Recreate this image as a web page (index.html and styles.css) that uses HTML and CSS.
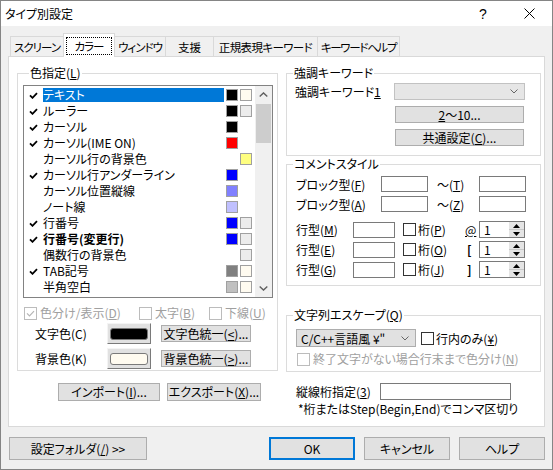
FILE: index.html
```html
<!DOCTYPE html>
<html lang="ja">
<head>
<meta charset="utf-8">
<title>タイプ別設定</title>
<link rel="stylesheet" href="styles.css">
</head>
<body>
<div class="window">
  <div class="titlebar">
    <div class="title">タイプ別設定</div>
    <div class="capbtn help">?</div>
    <div class="capbtn"><svg width="11" height="11" viewBox="0 0 11 11"><path d="M0.5 0.5L10.5 10.5M10.5 0.5L0.5 10.5" stroke="#000" stroke-width="1" fill="none"/></svg></div>
  </div>
  <div class="body">
    <div class="tabs">
      <div class="tab t1">スクリーン</div>
      <div class="tab sel t2"><span class="focus">カラー</span></div>
      <div class="tab t3">ウィンドウ</div>
      <div class="tab t4">支援</div>
      <div class="tab t5">正規表現キーワード</div>
      <div class="tab t6">キーワードヘルプ</div>
    </div>
    <div class="panel">
      <div class="col-left">
        <div class="group g-color">
          <div class="legend">色指定(<u>L</u>)</div>
          <div class="listbox">
            <div class="rows">
              <div class="row"><span class="ck"><svg width="9" height="7" viewBox="0 0 9 7"><path d="M1 3.3L3.5 5.8L8 1.2" fill="none" stroke="#000" stroke-width="1.8"/></svg></span><span class="lbl on">テキスト</span><span class="sw c-black"></span><span class="sw c-cream"></span></div>
              <div class="row"><span class="ck"><svg width="9" height="7" viewBox="0 0 9 7"><path d="M1 3.3L3.5 5.8L8 1.2" fill="none" stroke="#000" stroke-width="1.8"/></svg></span><span class="lbl">ルーラー</span><span class="sw c-black"></span><span class="sw c-lgray"></span></div>
              <div class="row"><span class="ck"><svg width="9" height="7" viewBox="0 0 9 7"><path d="M1 3.3L3.5 5.8L8 1.2" fill="none" stroke="#000" stroke-width="1.8"/></svg></span><span class="lbl">カーソル</span><span class="sw c-black"></span><span class="sw none"></span></div>
              <div class="row"><span class="ck"><svg width="9" height="7" viewBox="0 0 9 7"><path d="M1 3.3L3.5 5.8L8 1.2" fill="none" stroke="#000" stroke-width="1.8"/></svg></span><span class="lbl">カーソル(IME ON)</span><span class="sw c-red"></span><span class="sw none"></span></div>
              <div class="row"><span class="ck"></span><span class="lbl">カーソル行の背景色</span><span class="sw none"></span><span class="sw c-yellow"></span></div>
              <div class="row"><span class="ck"><svg width="9" height="7" viewBox="0 0 9 7"><path d="M1 3.3L3.5 5.8L8 1.2" fill="none" stroke="#000" stroke-width="1.8"/></svg></span><span class="lbl">カーソル行アンダーライン</span><span class="sw c-blue"></span><span class="sw none"></span></div>
              <div class="row"><span class="ck"></span><span class="lbl">カーソル位置縦線</span><span class="sw c-violet"></span><span class="sw none"></span></div>
              <div class="row"><span class="ck"></span><span class="lbl">ノート線</span><span class="sw c-lviolet"></span><span class="sw none"></span></div>
              <div class="row"><span class="ck"><svg width="9" height="7" viewBox="0 0 9 7"><path d="M1 3.3L3.5 5.8L8 1.2" fill="none" stroke="#000" stroke-width="1.8"/></svg></span><span class="lbl">行番号</span><span class="sw c-blue"></span><span class="sw c-lgray"></span></div>
              <div class="row"><span class="ck"><svg width="9" height="7" viewBox="0 0 9 7"><path d="M1 3.3L3.5 5.8L8 1.2" fill="none" stroke="#000" stroke-width="1.8"/></svg></span><span class="lbl bold">行番号(変更行)</span><span class="sw c-blue"></span><span class="sw c-lgray"></span></div>
              <div class="row"><span class="ck"></span><span class="lbl">偶数行の背景色</span><span class="sw none"></span><span class="sw c-lgray"></span></div>
              <div class="row"><span class="ck"><svg width="9" height="7" viewBox="0 0 9 7"><path d="M1 3.3L3.5 5.8L8 1.2" fill="none" stroke="#000" stroke-width="1.8"/></svg></span><span class="lbl">TAB記号</span><span class="sw c-gray"></span><span class="sw c-cream"></span></div>
              <div class="row"><span class="ck"></span><span class="lbl">半角空白</span><span class="sw c-silver"></span><span class="sw c-cream"></span></div>
            </div>
            <div class="vscroll">
              <div class="sbtn"><svg width="9" height="5" viewBox="0 0 9 5"><path d="M0.7 4.4L4.5 0.9L8.3 4.4" fill="none" stroke="#606060" stroke-width="1.4"/></svg></div>
              <div class="thumb"></div>
              <div class="sfill"></div>
              <div class="sbtn"><svg width="9" height="5" viewBox="0 0 9 5"><path d="M0.7 0.6L4.5 4.1L8.3 0.6" fill="none" stroke="#606060" stroke-width="1.4"/></svg></div>
            </div>
          </div>
          <div class="opts">
            <div class="opt o1"><span class="cb dis"><svg width="9" height="7" viewBox="0 0 9 7"><path d="M1 3.3L3.5 5.8L8 1.2" fill="none" stroke="#b5b5b5" stroke-width="1.2"/></svg></span><span class="dtext">色分け/表示(<u>D</u>)</span></div>
            <div class="opt o2"><span class="cb dis"></span><span class="dtext">太字(<u>B</u>)</span></div>
            <div class="opt o3"><span class="cb dis"></span><span class="dtext">下線(<u>U</u>)</span></div>
          </div>
          <div class="crow">
            <span class="clabel">文字色(C)</span>
            <span class="colorbtn"><span class="cswatch c-black"></span></span>
            <span class="btn unify">文字色統一(<u>&lt;</u>)...</span>
          </div>
          <div class="crow second">
            <span class="clabel">背景色(K)</span>
            <span class="colorbtn"><span class="cswatch c-cream"></span></span>
            <span class="btn unify">背景色統一(<u>&gt;</u>)...</span>
          </div>
        </div>
        <div class="io">
          <span class="btn imp">インポート(<u>I</u>)...</span>
          <span class="btn exp">エクスポート(<u>X</u>)...</span>
        </div>
      </div>
      <div class="col-right">
        <div class="group g-kw">
          <div class="legend">強調キーワード</div>
          <div class="kwrow">
            <span class="kwlabel">強調キーワード<u>1</u></span>
            <span class="combo kwcombo"><span class="combotext"></span><svg width="8" height="5" viewBox="0 0 8 5"><path d="M0.5 0.5L4 4L7.5 0.5" fill="none" stroke="#666" stroke-width="1"/></svg></span>
          </div>
          <span class="btn kwbtn b1"><u>2</u>〜10...</span>
          <span class="btn kwbtn b2">共通設定(<u>C</u>)...</span>
        </div>
        <div class="group g-cm">
          <div class="legend">コメントスタイル</div>
          <div class="brow r1">
            <span class="blabel">ブロック型(<u>F</u>)</span>
            <span class="edit bedit"></span>
            <span class="tilde">〜(<u>T</u>)</span>
            <span class="edit bedit"></span>
          </div>
          <div class="brow r2">
            <span class="blabel">ブロック型(<u>A</u>)</span>
            <span class="edit bedit"></span>
            <span class="tilde">〜(<u>Z</u>)</span>
            <span class="edit bedit"></span>
          </div>
          <div class="lrow r3">
            <span class="llabel">行型(<u>M</u>)</span>
            <span class="edit ledit"></span>
            <span class="cb"></span>
            <span class="ketalabel">桁(<u>P</u>)</span>
            <span class="sym"><u>@</u></span>
            <span class="spin"><span class="val">1</span><span class="ud"><span class="udh"><svg width="7" height="4" viewBox="0 0 7 4"><path d="M0 4L3.5 0L7 4Z" fill="#000"/></svg></span><span class="udh"><svg width="7" height="4" viewBox="0 0 7 4"><path d="M0 0L3.5 4L7 0Z" fill="#000"/></svg></span></span></span>
          </div>
          <div class="lrow r4">
            <span class="llabel">行型(<u>E</u>)</span>
            <span class="edit ledit"></span>
            <span class="cb"></span>
            <span class="ketalabel">桁(<u>O</u>)</span>
            <span class="sym br"><u>[</u></span>
            <span class="spin"><span class="val">1</span><span class="ud"><span class="udh"><svg width="7" height="4" viewBox="0 0 7 4"><path d="M0 4L3.5 0L7 4Z" fill="#000"/></svg></span><span class="udh"><svg width="7" height="4" viewBox="0 0 7 4"><path d="M0 0L3.5 4L7 0Z" fill="#000"/></svg></span></span></span>
          </div>
          <div class="lrow r5">
            <span class="llabel">行型(<u>G</u>)</span>
            <span class="edit ledit"></span>
            <span class="cb"></span>
            <span class="ketalabel">桁(<u>J</u>)</span>
            <span class="sym br"><u>]</u></span>
            <span class="spin"><span class="val">1</span><span class="ud"><span class="udh"><svg width="7" height="4" viewBox="0 0 7 4"><path d="M0 4L3.5 0L7 4Z" fill="#000"/></svg></span><span class="udh"><svg width="7" height="4" viewBox="0 0 7 4"><path d="M0 0L3.5 4L7 0Z" fill="#000"/></svg></span></span></span>
          </div>
        </div>
        <div class="group g-esc">
          <div class="legend">文字列エスケープ(<u>Q</u>)</div>
          <div class="erow">
            <span class="combo esccombo"><span class="combotext">C/C++言語風 ¥"</span><svg width="8" height="5" viewBox="0 0 8 5"><path d="M0.5 0.5L4 4L7.5 0.5" fill="none" stroke="#666" stroke-width="1"/></svg></span>
            <span class="cb"></span>
            <span class="etext">行内のみ(<u>¥</u>)</span>
          </div>
          <div class="erow2">
            <span class="cb dis"></span>
            <span class="dtext">終了文字がない場合行末まで色分け(<u>N</u>)</span>
          </div>
        </div>
        <div class="vrow">
          <span class="vlabel">縦線桁指定(<u>3</u>)</span>
          <span class="edit vedit"></span>
        </div>
        <div class="note">*桁またはStep(Begin,End)でコンマ区切り</div>
      </div>
    </div>
    <div class="footer">
      <span class="btn fbtn folder">設定フォルダ(<u>/</u>) &gt;&gt;</span>
      <div class="fright">
        <span class="btn fbtn default">OK</span>
        <span class="btn fbtn">キャンセル</span>
        <span class="btn fbtn">ヘルプ</span>
      </div>
    </div>
  </div>
</div>
</body>
</html>
```
FILE: styles.css
```css
* { box-sizing: border-box; }
html, body { margin: 0; padding: 0; }
body {
  font-family: "Noto Sans CJK JP", "Noto Sans", sans-serif;
  font-size: 12px;
  color: #000;
  font-feature-settings: "palt";
  background: #f0f0f0;
}
u { text-decoration: underline; text-underline-offset: 1px; }

.window {
  width: 553px;
  height: 470px;
  border: 1px solid #858585;
  background: #f0f0f0;
  display: flex;
  flex-direction: column;
}
.titlebar {
  height: 25px;
  background: #fff;
  display: flex;
  align-items: center;
  flex: none;
}
.title { flex: 1; padding-left: 4px; line-height: 25px; }
.capbtn {
  width: 46px;
  height: 25px;
  display: flex;
  align-items: center;
  justify-content: center;
}
.capbtn.help { font-size: 14px; font-family: "Liberation Sans", sans-serif; }

.body { padding: 7px 0 0 7px; }

/* tabs */
.tabs {
  display: flex;
  align-items: flex-end;
  height: 23px;
  margin-left: 2px;
}
.tab {
  height: 20px;
  border: 1px solid #d9d9d9;
  border-bottom: none;
  background: #f0f0f0;
  margin-right: -1px;
  display: flex;
  align-items: center;
  justify-content: center;
  white-space: nowrap;
  line-height: 14px;
  font-size: 11.5px;
  letter-spacing: -1px;
}
.tab.sel {
  height: 24px;
  background: #fff;
  margin-bottom: -1px;
  position: relative;
  z-index: 1;
  align-items: flex-start;
  justify-content: flex-start;
  padding: 3px 0 0 2px;
}
.focus {
  display: flex;
  align-items: center;
  justify-content: center;
  width: 46px;
  height: 18px;
  border: 1px dotted #000;
}
.t1 { width: 54px; }
.t2 { width: 52px; }
.t3 { width: 52px; }
.t4 { width: 49px; letter-spacing: 0; }
.t5 { width: 105px; letter-spacing: -0.6px; }
.t6 { width: 83px; letter-spacing: -1.3px; }

/* panel */
.panel {
  width: 537px;
  height: 371px;
  border: 1px solid #d9d9d9;
  background: #fff;
  display: flex;
}
.col-left { margin-left: 8px; width: 261px; padding-top: 16px; }
.col-right { margin-left: 8px; width: 255px; padding-top: 16px; }

.group { border: 1px solid #dcdcdc; }
.legend {
  width: max-content;
  background: #fff;
  margin: -8px 0 0 6px;
  padding: 0 1px;
  height: 14px;
  line-height: 14px;
  white-space: nowrap;
}

/* color group */
.g-color { height: 298px; padding: 0 0 1px 5px; }
.listbox {
  margin-top: 5px;
  width: 250px;
  height: 213px;
  border: 1px solid #828282;
  display: flex;
}
.rows { width: 231px; padding-top: 1px; }
.row {
  display: grid;
  grid-template-columns: 19px 181px 14px 14px;
  height: 16px;
  align-items: center;
}
.ck { display: flex; align-items: center; padding-left: 5px; height: 16px; padding-top: 1px; }
.lbl {
  height: 14px;
  line-height: 14px;
  white-space: nowrap;
}
.lbl.on { background: #0078d7; color: #fff; }
.lbl.bold { font-weight: bold; }
.sw {
  justify-self: end;
  width: 12px;
  height: 12px;
  border: 1px solid #a0a0a0;
}
.sw.none { border: none; }
.c-black { background: #000; }
.c-cream { background: #fffbf0; }
.c-lgray { background: #ececec; }
.c-red { background: #ff0000; }
.c-yellow { background: #ffff80; }
.c-blue { background: #0000ff; }
.c-violet { background: #8080ff; }
.c-lviolet { background: #c0c0ff; }
.c-gray { background: #808080; }
.c-silver { background: #c0c0c0; }

.vscroll {
  width: 17px;
  background: #f0f0f0;
  display: flex;
  flex-direction: column;
}
.sbtn { height: 17px; display: flex; align-items: center; justify-content: center; }
.thumb { margin: 1px 0 0 1px; width: 15px; height: 39px; background: #cdcdcd; }
.sfill { flex: 1; }

.opts { margin-top: 8px; height: 14px; display: flex; align-items: center; }
.opt { display: flex; align-items: center; white-space: nowrap; }
.o1 { width: 115px; margin-left: 1px; }
.o2 { width: 70px; }
.cb {
  flex: none;
  width: 13px;
  height: 13px;
  border: 1px solid #333;
  background: #fff;
  display: flex;
  align-items: center;
  justify-content: center;
}
.cb.dis { border-color: #bcbcbc; }
.dtext { color: #a0a0a0; margin-left: 3px; line-height: 14px; }

.crow { display: flex; align-items: center; height: 21px; margin-top: 3px; padding-left: 12px; }
.crow.second { margin-top: 4px; }
.clabel { width: 72px; white-space: nowrap; }
.colorbtn {
  width: 44px;
  height: 21px;
  background: #e1e1e1;
  border: 1px solid;
  border-color: #f4f4f4 #7a7a7a #7a7a7a #f4f4f4;
  display: flex;
  align-items: center;
  justify-content: center;
}
.cswatch { width: 38px; height: 12px; border: 1px solid #7a7a7a; border-radius: 3px; }

.btn {
  background: #e1e1e1;
  border: 1px solid #adadad;
  display: flex;
  align-items: center;
  justify-content: center;
  white-space: nowrap;
  line-height: 14px;
}
.unify { width: 90px; height: 17px; margin-left: 10px; }

.io { display: flex; margin-top: 12px; height: 18px; }
.imp { width: 102px; margin-left: 41px; }
.exp { width: 94px; margin-left: 7px; }

/* keyword group */
.g-kw { height: 83px; }
.kwrow { display: flex; align-items: center; margin-top: 3px; height: 17px; padding-left: 8px; }
.kwlabel { width: 99px; white-space: nowrap; }
.combo {
  display: flex;
  align-items: center;
  justify-content: space-between;
  padding: 0 6px 0 4px;
  white-space: nowrap;
}
.kwcombo { width: 131px; height: 17px; background: #e6e6e6; border: 1px solid #c2c2c2; }
.kwbtn { width: 129px; height: 17px; margin-left: 108px; margin-top: 6px; }

/* comment group */
.g-cm { margin-top: 8px; height: 122px; }
.brow { display: flex; align-items: center; height: 16px; padding-left: 9px; }
.brow.r1 { margin-top: 5px; }
.brow.r2 { margin-top: 4px; }
.blabel { width: 85px; white-space: nowrap; }
.edit { background: #fff; border: 1px solid #7a7a7a; flex: none; }
.bedit { width: 47px; height: 16px; }
.tilde { width: 51px; padding-left: 9px; white-space: nowrap; }

.lrow { display: flex; align-items: center; height: 17px; padding-left: 9px; margin-top: 3px; }
.lrow.r3 { margin-top: 9px; }
.llabel { width: 57px; white-space: nowrap; }
.ledit { width: 42px; height: 16px; }
.lrow .cb { margin-left: 8px; }
.ketalabel { width: 46px; margin-left: 2px; white-space: nowrap; }
.sym { width: 15px; padding-left: 1px; }
.sym.br { font-weight: bold; padding-left: 3px; }
.spin {
  width: 46px;
  height: 17px;
  border: 1px solid #7a7a7a;
  background: #fff;
  display: flex;
}
.val { flex: 1; padding-left: 4px; line-height: 15px; }
.ud { width: 16px; display: flex; flex-direction: column; background: #e5e5e5; border-left: 1px solid #fff; }
.udh { flex: 1; display: flex; align-items: center; justify-content: center; }
.udh + .udh { border-top: 1px solid #c8c8c8; }

/* escape group */
.g-esc { margin-top: 29px; height: 57px; }
.erow { display: flex; align-items: center; margin-top: 7px; height: 18px; padding-left: 9px; }
.esccombo { width: 120px; height: 18px; background: #e1e1e1; border: 1px solid #adadad; }
.erow .cb { margin-left: 5px; }
.etext { margin-left: 2px; white-space: nowrap; }
.erow2 { display: flex; align-items: center; margin-top: 5px; height: 14px; padding-left: 10px; white-space: nowrap; }

.vrow { display: flex; align-items: center; margin-top: 11px; height: 17px; padding-left: 10px; }
.vlabel { width: 84px; white-space: nowrap; }
.vedit { width: 131px; height: 17px; }
.note { margin-top: 2px; height: 14px; line-height: 14px; padding-left: 12px; white-space: nowrap; }

/* footer */
.footer { width: 537px; display: flex; justify-content: space-between; margin-top: 10px; height: 23px; }
.fbtn { width: 86px; height: 23px; }
.folder { width: 138px; margin-left: 1px; }
.fright { display: flex; gap: 9px; }
.default { border: 2px solid #0078d7; }
```
